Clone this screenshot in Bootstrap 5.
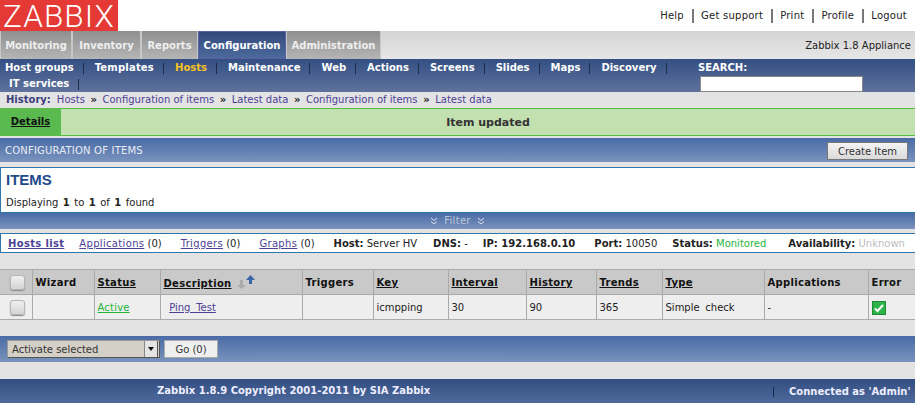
<!DOCTYPE html>
<html lang="en"><head><meta charset="utf-8"><title>Zabbix</title>
<link href="https://cdn.jsdelivr.net/npm/bootstrap@5.3.0/dist/css/bootstrap.min.css" rel="stylesheet">
<style>
html,body{height:403px;overflow:hidden}
body{background:#e3e3e3;font:10px/14px "DejaVu Sans",sans-serif;color:#222}
a{color:#4b4197}
.zb-top{height:31px;background:#fff}
.zb-logo{width:118px;height:31px;background:#e53935;color:#fff;font:300 31.500px/29px Roboto,"Liberation Sans",sans-serif;padding:2px 0 0 3px;letter-spacing:1.100px;white-space:nowrap}
.zb-toplinks{padding:9px 0 0 0;color:#222;letter-spacing:.25px}
.zb-toplinks span{padding:0 8px 0 7px;border-left:2px solid #777;line-height:14px;display:block;height:14px}
.zb-toplinks span:first-child{border-left:0}
.zb-tabs{height:28px;background:linear-gradient(#d4d4d4,#e6e6e6)}
.zb-tab{font-weight:700;color:#eee;background:linear-gradient(#8f8f8f,#b5b5b5);border:1px solid #c8c8c8;border-top:0;border-bottom:0;padding:8px 0 0;height:28px;text-align:center}
.zb-tab:nth-child(1){width:72px}
.zb-tab:nth-child(2){width:69px}
.zb-tab:nth-child(3){width:57px}
.zb-tab:nth-child(4){width:88px}
.zb-tab:nth-child(5){width:95px}
.zb-tab.on{background:linear-gradient(#33497c,#4c6a9c);border:1px solid #5a5fa8;color:#fff;padding-top:7px}
.zb-apl{line-height:29px}
.zb-sub{height:33px;background:linear-gradient(#344f83,#5f729c);padding:1px 0 0 5px;color:#fff;font-weight:700;line-height:16px}
.zb-sublinks{width:693px}
.zb-sublinks span{padding-right:10px;margin-right:11px;position:relative;white-space:nowrap;display:inline-block}
.zb-sublinks span::after{content:"";position:absolute;right:0;top:3px;height:11px;border-right:1px solid #1d2a46}
.zb-sublinks .cur{color:#f7c321}
.zb-sublinks .tpl{letter-spacing:.2px}
.zb-sublinks .l2{margin-left:4px}
.zb-search{width:170px}
.zb-search input{display:block;width:163px;height:16px;border:1px solid #888;background:#fff;margin:0 0 0 2px;padding:0}
.zb-hist{height:16px;padding-left:6px;white-space:nowrap;line-height:16px}
.zb-hist b{color:#3d3d80;margin-right:6px}
.zb-hist i{font-style:normal;font-weight:700;color:#222;margin:0 2.400px}
.zb-hist a{text-decoration:none}
.zb-msg{height:28px;background:#c3e0b1;border-top:1px solid #55c045;border-bottom:1px solid #55c045;font-weight:700;color:#333}
.zb-det{width:61px;background:#5ab94f;color:#111;text-align:center;text-decoration:underline;line-height:26px}
.zb-msgtxt{text-align:center;line-height:28px;font-size:11px}
.zb-band{background:linear-gradient(#4a6ba6,#7a93bd)}
.zb-hdr{margin-top:2px;height:24px;color:#e8ecf4;padding:0 7px 0 5px;line-height:25px;letter-spacing:.2px}
.zb-btn{height:18px;width:81px;background:linear-gradient(#f4f4f4,#dadada);border:1px solid #777;color:#333;font:10px/15px "DejaVu Sans",sans-serif;padding:0;margin-top:4px;border-radius:0}
.zb-items{margin-top:5px;height:46px;background:#fff;border:1px solid #2e76ac;border-right:0;padding:1px 5px;word-spacing:1.300px}
.zb-items h1{font:700 15px/20px "Liberation Sans",sans-serif;color:#234a8c;margin:1px 0 6px}
.zb-filter{height:16px;text-align:center;color:#bcc6da;line-height:16px;letter-spacing:.3px}
.zb-filter svg{vertical-align:-1px;margin:0 3px}
.zb-info{margin-top:4px;height:20px;background:#fff;border:1px solid #2e76ac;border-right:0;padding:2px 0 0 7px;white-space:nowrap;line-height:15px}
.zb-info a{letter-spacing:.33px}
.zb-info .gap{display:inline-block}
.zb-g15{width:15px}.zb-g16{width:16px}.zb-g18{width:18px}.zb-g19{width:19px}.zb-g22{width:22px}
.zb-green{color:#1fb53a}
.zb-grey{color:#bbb}
.zb-table{width:915px;table-layout:fixed;border-collapse:collapse;margin:16px 0 0}
.zb-table td,.zb-table th{border:1px solid #aaa;height:25px;padding:1px 3px 0;vertical-align:middle;white-space:nowrap;overflow:hidden;color:#222;line-height:14px}
.zb-table td{word-spacing:2.500px;background:#eee}
.zb-table th{background:#c9c9c9;font-weight:700;color:#111;letter-spacing:.3px}
.zb-table tr>*:first-child{border-left:0}
.zb-table tr>*:last-child{border-right:0}
.zb-table a.zb-green{color:#1fb53a;letter-spacing:.2px}
.zb-arrow{vertical-align:-2px;margin-left:2px}
.zb-cb{display:block;width:15px;height:15px;margin:0 0 0 7px;border:1px solid #b5b5b5;border-radius:3px;background:linear-gradient(#f0f0f0,#d4d4d4);box-shadow:0 1px 1px #888}
.zb-go{margin-top:16px;height:26px;padding:4px 0 0 7px}
.zb-sel{width:153px;height:18px;background:#d4d0c8;border:1px solid #999;border-right-color:#555;border-bottom-color:#555;line-height:17px;padding-left:4px;color:#333;position:relative}
.zb-sel::after{content:"";position:absolute;right:1px;top:0;width:14px;height:16px;background:#e4e4e4;border-left:1px solid #888;border-right:1px solid #555}
.zb-sel::before{content:"";position:absolute;z-index:1;right:5px;top:6px;border:3px solid transparent;border-top:4px solid #111;border-bottom:0}
.zb-gobtn{width:54px;height:18px;background:#efefef;border:1px solid #aaa;color:#333;font:10px/15px "DejaVu Sans",sans-serif;padding:1px 0 0;margin-left:4px;border-radius:0}
.zb-foot{margin-top:17px;height:24px;background:linear-gradient(#334e82,#4e6a9b);color:#eef;font-weight:700;line-height:24px}
.zb-foot .c1{width:773px;padding-left:157px}
.zb-foot .c2{border-left:1px solid #1d2a46;height:10px;margin-top:8px;line-height:9px;padding-left:15px;white-space:nowrap}
</style></head><body>
<div class="zb-top d-flex justify-content-between">
 <div class="zb-logo">ZABBIX</div>
 <div class="zb-toplinks d-flex"><span>Help</span><span>Get support</span><span>Print</span><span>Profile</span><span>Logout</span></div>
</div>
<div class="zb-tabs d-flex justify-content-between">
 <div class="d-flex"><div class="zb-tab">Monitoring</div><div class="zb-tab">Inventory</div><div class="zb-tab">Reports</div><div class="zb-tab on">Configuration</div><div class="zb-tab">Administration</div></div>
 <div class="pe-1 zb-apl">Zabbix 1.8 Appliance</div>
</div>
<div class="zb-sub d-flex">
 <div class="zb-sublinks"><span>Host groups</span><span class="tpl">Templates</span><span class="cur">Hosts</span><span>Maintenance</span><span>Web</span><span>Actions</span><span>Screens</span><span>Slides</span><span>Maps</span><span>Discovery</span><span class="l2">IT services</span></div>
 <div class="zb-search">SEARCH:<input type="text" aria-label="Search"></div>
</div>
<div class="zb-hist"><b>History:</b><a href="#">Hosts</a> <i>»</i> <a href="#">Configuration of items</a> <i>»</i> <a href="#">Latest data</a> <i>»</i> <a href="#">Configuration of items</a> <i>»</i> <a href="#">Latest data</a></div>
<div class="zb-msg d-flex"><div class="zb-det">Details</div><div class="zb-msgtxt flex-grow-1">Item updated</div></div>
<div class="zb-band zb-hdr d-flex justify-content-between"><div>CONFIGURATION OF ITEMS</div><button class="zb-btn" type="button">Create Item</button></div>
<div class="zb-items"><h1>ITEMS</h1>Displaying <b>1</b> to <b>1</b> of <b>1</b> found</div>
<div class="zb-band zb-filter"><svg width="8" height="8" viewBox="0 0 8 8" fill="none" stroke="#dfe5f0"><path d="M1 1l3 2.500L7 1M1 4.500L4 7l3-2.500"/></svg> Filter <svg width="8" height="8" viewBox="0 0 8 8" fill="none" stroke="#dfe5f0"><path d="M1 1l3 2.500L7 1M1 4.500L4 7l3-2.500"/></svg></div>
<div class="zb-info"><a href="#"><b>Hosts list</b></a><span class="gap zb-g15"></span><a href="#">Applications</a> (0)<span class="gap zb-g19"></span><a href="#">Triggers</a> (0)<span class="gap zb-g19"></span><a href="#">Graphs</a> (0)<span class="gap zb-g19"></span><b>Host:</b> Server HV<span class="gap zb-g16"></span><b>DNS:</b> -<span class="gap zb-g15"></span><b>IP: 192.168.0.10</b><span class="gap zb-g19"></span><b>Port:</b> 10050<span class="gap zb-g15"></span><b>Status:</b> <span class="zb-green">Monitored</span><span class="gap zb-g22"></span><b>Availability:</b> <span class="zb-grey">Unknown</span></div>
<table class="zb-table"><colgroup><col style="width:32px"><col style="width:62px"><col style="width:66px"><col style="width:142px"><col style="width:71px"><col style="width:75px"><col style="width:78px"><col style="width:70px"><col style="width:66px"><col style="width:102px"><col style="width:104px"><col style="width:47px"></colgroup>
<thead><tr><th><span class="zb-cb"></span></th><th>Wizard</th><th><u>Status</u></th><th><u>Description</u> <svg class="zb-arrow" width="18" height="14" viewBox="0 0 18 14"><path d="M3 5h3v5h3l-4.500 4L0 10h3z" fill="#aaa"/><path d="M13.500 0L18 5h-3v4h-3V5H9z" fill="#3a66a8"/></svg></th><th>Triggers</th><th><u>Key</u></th><th><u>Interval</u></th><th><u>History</u></th><th><u>Trends</u></th><th><u>Type</u></th><th>Applications</th><th>Error</th></tr></thead>
<tbody><tr><td><span class="zb-cb"></span></td><td></td><td><a href="#" class="zb-green">Active</a></td><td>&nbsp;<a href="#">Ping Test</a></td><td></td><td>icmpping</td><td>30</td><td>90</td><td>365</td><td>Simple check</td><td>-</td><td><svg class="d-block" width="14" height="14" viewBox="0 0 14 14"><rect x=".5" y=".5" width="13" height="13" fill="#2eb34a" stroke="#1d8a35"/><path d="M3 7.500l2.500 2.500L11 4" fill="none" stroke="#fff" stroke-width="2"/></svg></td></tr></tbody></table>
<div class="zb-band zb-go d-flex"><div class="zb-sel">Activate selected</div><button class="zb-gobtn" type="button">Go (0)</button></div>
<div class="zb-foot d-flex"><div class="c1">Zabbix 1.8.9 Copyright 2001-2011 by SIA Zabbix</div><div class="c2">Connected as 'Admin'</div></div>
</body></html>
